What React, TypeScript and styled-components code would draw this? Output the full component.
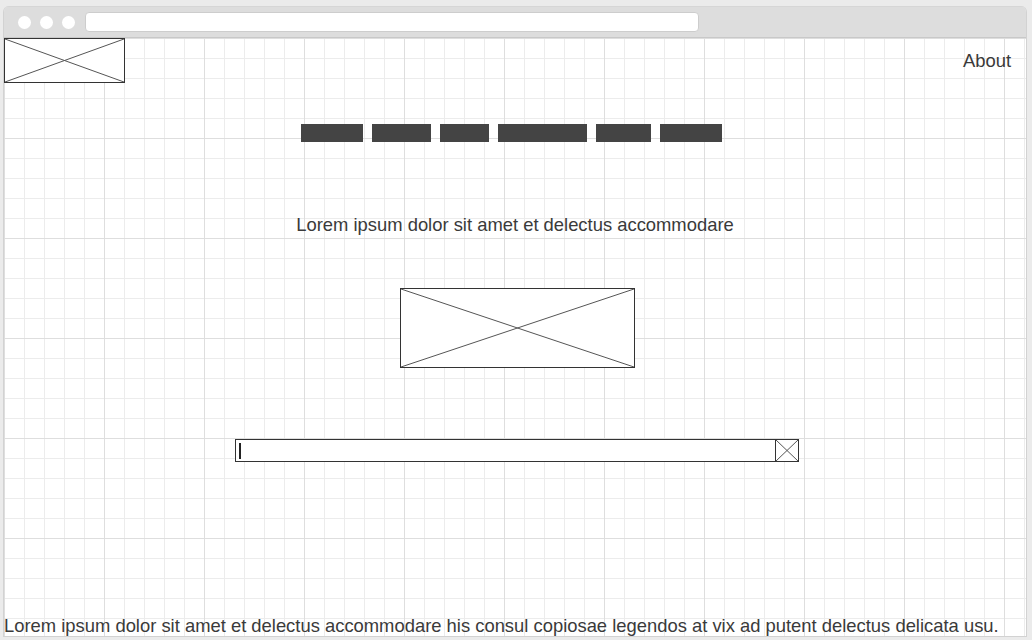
import React from 'react';
import styled, { createGlobalStyle } from 'styled-components';

const GlobalStyle = createGlobalStyle`
  html, body {
    margin: 0;
    padding: 0;
    background: #ebebeb;
    font-family: "Liberation Sans", Arial, sans-serif;
  }
`;

const Page = styled.div`
  width: 1032px;
  height: 640px;
  padding: 6px 5px 3px 3px;
  box-sizing: border-box;
  display: flex;
`;

const Window = styled.div`
  flex: 1;
  display: flex;
  flex-direction: column;
  border: 1px solid #d2d2d2;
  border-top: none;
  border-radius: 6px 6px 0 0;
  overflow: hidden;
`;

const TitleBar = styled.div`
  height: 32px;
  flex: 0 0 32px;
  background: #dddddd;
  border-top: 1px solid #d6d6d6;
  border-bottom: 1px solid #c8c8c8;
  box-sizing: border-box;
  display: flex;
  align-items: center;
  padding-left: 14px;
  gap: 9px;
`;

const Dot = styled.span`
  width: 13px;
  height: 13px;
  border-radius: 50%;
  background: #fff;
`;

const AddressBar = styled.div`
  margin-left: 1px;
  width: 614px;
  height: 20px;
  background: #fff;
  border: 1px solid #cdcdcd;
  border-radius: 4px;
  box-sizing: border-box;
`;

const Canvas = styled.div`
  flex: 1;
  position: relative;
  background-color: #fff;
  background-image:
    linear-gradient(to right, #dedede 1px, transparent 1px),
    linear-gradient(to bottom, #dedede 1px, transparent 1px),
    linear-gradient(to right, #ececec 1px, transparent 1px),
    linear-gradient(to bottom, #ececec 1px, transparent 1px);
  background-size: 100px 100px, 100px 100px, 20px 20px, 20px 20px;
  background-position: 0 0, 0 0, 0 0, 0 0;
  display: flex;
  flex-direction: column;
  align-items: center;
  color: #3a3a3a;
`;

const Header = styled.div`
  align-self: stretch;
  display: flex;
  justify-content: space-between;
  align-items: flex-start;
`;

const Placeholder = styled.div<{ $w: number; $h: number }>`
  width: ${p => p.$w}px;
  height: ${p => p.$h}px;
  border: 1px solid #333;
  box-sizing: border-box;
  background: #fff;
  flex: 0 0 auto;
  svg {
    display: block;
    width: 100%;
    height: 100%;
  }
`;

const AboutLink = styled.a`
  font-size: 18.4px;
  color: #3a3a3a;
  margin: 12px 15px 0 0;
  text-decoration: none;
`;

const Nav = styled.div`
  display: flex;
  gap: 9px;
  margin-top: 41px;
  margin-left: -7px;
`;

const NavBar = styled.span<{ $w: number }>`
  width: ${p => p.$w}px;
  height: 18px;
  background: #444;
`;

const Tagline = styled.p`
  margin: 72px 0 0 0;
  font-size: 18.4px;
  line-height: 21px;
`;

const ImageWrap = styled.div`
  margin-top: 53px;
  margin-left: 5px;
`;

const SearchBox = styled.div`
  margin-top: 71px;
  width: 564px;
  height: 23px;
  border: 1px solid #333;
  box-sizing: border-box;
  display: flex;
  background: #fff;
  margin-left: 4px;
`;

const Field = styled.div`
  flex: 1;
  display: flex;
  align-items: center;
  padding-left: 3px;
`;

const Caret = styled.span`
  width: 2px;
  height: 16px;
  background: #222;
`;

const ClearBox = styled.div`
  width: 22px;
  border-left: 1px solid #333;
  svg {
    display: block;
    width: 100%;
    height: 100%;
  }
`;

const Footer = styled.p`
  margin: auto 0 0 0;
  align-self: stretch;
  font-size: 18.4px;
  line-height: 21px;
  white-space: nowrap;
`;

const Cross = () => (
  <svg viewBox="0 0 100 100" preserveAspectRatio="none">
    <line x1="0" y1="0" x2="100" y2="100" stroke="#555" strokeWidth="1" vectorEffect="non-scaling-stroke" />
    <line x1="100" y1="0" x2="0" y2="100" stroke="#555" strokeWidth="1" vectorEffect="non-scaling-stroke" />
  </svg>
);

const navWidths = [62, 59, 49, 89, 55, 62];

export default function App() {
  return (
    <>
      <GlobalStyle />
      <Page>
        <Window>
          <TitleBar>
            <Dot />
            <Dot />
            <Dot />
            <AddressBar />
          </TitleBar>
          <Canvas>
            <Header>
              <Placeholder $w={121} $h={45}>
                <Cross />
              </Placeholder>
              <AboutLink>About</AboutLink>
            </Header>
            <Nav>
              {navWidths.map((w, i) => (
                <NavBar key={i} $w={w} />
              ))}
            </Nav>
            <Tagline>Lorem ipsum dolor sit amet et delectus accommodare</Tagline>
            <ImageWrap>
              <Placeholder $w={235} $h={80}>
                <Cross />
              </Placeholder>
            </ImageWrap>
            <SearchBox>
              <Field>
                <Caret />
              </Field>
              <ClearBox>
                <Cross />
              </ClearBox>
            </SearchBox>
            <Footer>
              Lorem ipsum dolor sit amet et delectus accommodare his consul copiosae legendos at vix ad putent delectus delicata usu.
            </Footer>
          </Canvas>
        </Window>
      </Page>
    </>
  );
}
